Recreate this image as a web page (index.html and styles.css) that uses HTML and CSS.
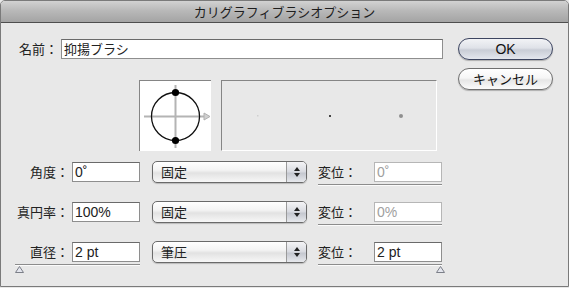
FILE: index.html
```html
<!DOCTYPE html>
<html lang="ja">
<head>
<meta charset="utf-8">
<link rel="stylesheet" href="styles.css">
</head>
<body>
<div class="window">
  <div class="titlebar">カリグラフィブラシオプション</div>
  <div class="content">
    <div class="left">
      <div class="name-row">
        <span class="label name-label">名前：</span>
        <div class="field name-field">抑揚ブラシ</div>
      </div>
      <div class="preview">
        <div class="pbox pbox-tip">
          <svg width="71" height="70" viewBox="0 0 71 70">
            <line x1="4" y1="35.5" x2="65" y2="35.5" stroke="#b4b4b4" stroke-width="2"/>
            <polygon points="64,32 70,35.5 64,39" fill="#d0d0d0" stroke="#b0b0b0" stroke-width="1"/>
            <line x1="35.5" y1="4" x2="35.5" y2="67" stroke="#b4b4b4" stroke-width="2"/>
            <circle cx="35.5" cy="35.5" r="24" fill="none" stroke="#111" stroke-width="1.3"/>
            <circle cx="35.5" cy="11.5" r="3.6" fill="#000"/>
            <circle cx="35.5" cy="59.5" r="3.6" fill="#000"/>
          </svg>
        </div>
        <div class="pbox pbox-var">
          <svg width="214" height="69" viewBox="0 0 214 69">
            <rect x="35" y="34" width="1.5" height="1.5" fill="#cfcfcf"/>
            <rect x="107" y="34" width="2" height="2" fill="#444"/>
            <circle cx="179" cy="35" r="2" fill="#8f8f8f"/>
          </svg>
        </div>
      </div>
    </div>
    <div class="buttons">
      <div class="btn btn-default">OK</div>
      <div class="btn">キャンセル</div>
    </div>
  </div>
  <div class="rows">
    <div class="row">
      <div class="lgroup">
        <div class="lline">
          <span class="label rlabel">角度：</span>
          <div class="field num">0˚</div>
        </div>
      </div>
      <div class="select"><span class="sel-text">固定</span><span class="stepper"><i class="up"></i><i class="down"></i></span></div>
      <div class="vgroup">
        <div class="vline">
          <span class="label vlabel">変位：</span>
          <div class="field num disabled">0˚</div>
        </div>
        <div class="slider-line"></div>
      </div>
    </div>
    <div class="row">
      <div class="lgroup">
        <div class="lline">
          <span class="label rlabel">真円率：</span>
          <div class="field num">100%</div>
        </div>
      </div>
      <div class="select"><span class="sel-text">固定</span><span class="stepper"><i class="up"></i><i class="down"></i></span></div>
      <div class="vgroup">
        <div class="vline">
          <span class="label vlabel">変位：</span>
          <div class="field num disabled">0%</div>
        </div>
        <div class="slider-line"></div>
      </div>
    </div>
    <div class="row">
      <div class="lgroup">
        <div class="lline">
          <span class="label rlabel">直径：</span>
          <div class="field num">2 pt</div>
        </div>
        <div class="slider-line"></div>
        <svg class="thumb thumb-left" width="9" height="7" viewBox="0 0 9 7"><polygon points="4.5,0.5 8.5,6.5 0.5,6.5" fill="#e4e6ee" stroke="#7c7f88" stroke-width="1"/></svg>
      </div>
      <div class="select"><span class="sel-text">筆圧</span><span class="stepper"><i class="up"></i><i class="down"></i></span></div>
      <div class="vgroup">
        <div class="vline">
          <span class="label vlabel">変位：</span>
          <div class="field num">2 pt</div>
        </div>
        <div class="slider-line"></div>
        <svg class="thumb thumb-right" width="9" height="7" viewBox="0 0 9 7"><polygon points="4.5,0.5 8.5,6.5 0.5,6.5" fill="#e4e6ee" stroke="#7c7f88" stroke-width="1"/></svg>
      </div>
    </div>
  </div>
</div>
</body>
</html>
```
FILE: styles.css
```css
* { box-sizing: border-box; }
html, body { margin: 0; padding: 0; background: #e8e8e8; }
body {
  font-family: "Noto Sans CJK JP", "Liberation Sans", sans-serif;
  font-size: 13px;
  color: #222;
}
.window {
  width: 569px;
  height: 287px;
  border: 1px solid #7a7a7a;
  border-radius: 5px 5px 0 0;
  background: #e8e8e8;
  overflow: hidden;
}
.titlebar {
  height: 22px;
  border-bottom: 1px solid #4e4e4e;
  background: linear-gradient(#d2d2d2, #b9b9b9 45%, #a4a4a4);
  text-align: center;
  line-height: 21px;
  font-size: 13px;
  color: #1e1e1e;
}
.content {
  display: flex;
  padding-top: 16px;
}
.left { width: 442px; }
.name-row {
  display: flex;
  align-items: center;
  height: 20px;
}
.label { white-space: nowrap; line-height: 20px; }
.name-label { width: 57px; text-align: right; }
.field {
  height: 20px;
  background: #fff;
  border: 1px solid #8e8e8e;
  border-top-color: #6a6a6a;
  line-height: 18px;
  padding-left: 2px;
  white-space: nowrap;
}
.name-field { width: 382px; margin-left: 3px; }
.num {
  width: 68px;
  font-family: "Liberation Sans", sans-serif;
  font-size: 14px;
}
.disabled { color: #a0a0a0; border-color: #b6b6b6; }

.preview {
  display: flex;
  gap: 10px;
  margin-top: 21px;
  padding-left: 138px;
}
.pbox { height: 71px; }
.pbox svg { display: block; }
.pbox-tip {
  width: 72px;
  background: #fff;
  border-top: 1px solid #858585;
  border-left: 1px solid #858585;
}
.pbox-var {
  width: 216px;
  border: 1px solid #fff;
  border-top-color: #858585;
  border-left-color: #858585;
}

.buttons {
  display: flex;
  flex-direction: column;
  gap: 8px;
  margin-left: 15px;
  margin-top: -1px;
}
.btn {
  width: 95px;
  height: 22px;
  border-radius: 11px;
  border: 1px solid #6f6f6f;
  background: linear-gradient(#ffffff, #f6f6f6 45%, #e6e6e6 55%, #fbfbfb);
  box-shadow: 0 1px 1px rgba(0,0,0,0.25);
  text-align: center;
  line-height: 20px;
  font-size: 13px;
  color: #111;
}
.btn-default {
  border-color: #3d4560;
  background: linear-gradient(#f2f3f6, #dfe2e8 45%, #c9cdd6 55%, #e4e7ee);
  font-family: "Liberation Sans", sans-serif;
  font-size: 14px;
}

.rows {
  display: flex;
  flex-direction: column;
  gap: 18px;
  margin-top: 10px;
}
.row {
  display: flex;
  height: 22px;
  align-items: flex-start;
}
.lgroup {
  display: flex;
  flex-direction: column;
  width: 125px;
  margin-left: 14px;
}
.lline, .vline {
  display: flex;
  align-items: center;
  margin-top: 1px;
}
.rlabel { width: 54px; text-align: right; margin-right: 3px; }
.slider-line {
  margin-top: 2px;
  height: 2px;
  border-top: 1px solid #8c8c8c;
  border-bottom: 1px solid #fbfbfb;
}
.thumb { display: block; margin-top: 0; }
.thumb-left { align-self: flex-start; }
.thumb-right { align-self: flex-end; margin-right: -3px; }

.select {
  display: flex;
  width: 155px;
  height: 22px;
  margin-left: 12px;
  border: 1px solid #6a6a6a;
  border-radius: 5px;
  background: linear-gradient(#ffffff, #f4f4f4 40%, #e2e2e2 55%, #f7f7f7);
  box-shadow: 0 1px 1px rgba(0,0,0,0.2);
  overflow: hidden;
}
.sel-text {
  flex: 1;
  padding-left: 8px;
  line-height: 20px;
}
.stepper {
  width: 20px;
  border-left: 1px solid #9a9a9a;
  background: linear-gradient(#f4f4f6, #d8dae0 50%, #c4c7cf 55%, #e6e8ec);
  display: flex;
  flex-direction: column;
  align-items: center;
  justify-content: center;
  gap: 2px;
}
.stepper i {
  display: block;
  width: 0;
  height: 0;
  border-left: 3px solid transparent;
  border-right: 3px solid transparent;
}
.stepper .up { border-bottom: 4px solid #222; }
.stepper .down { border-top: 4px solid #222; }

.vgroup {
  display: flex;
  flex-direction: column;
  width: 124px;
  margin-left: 11px;
}
.vlabel { width: 56px; }
```
